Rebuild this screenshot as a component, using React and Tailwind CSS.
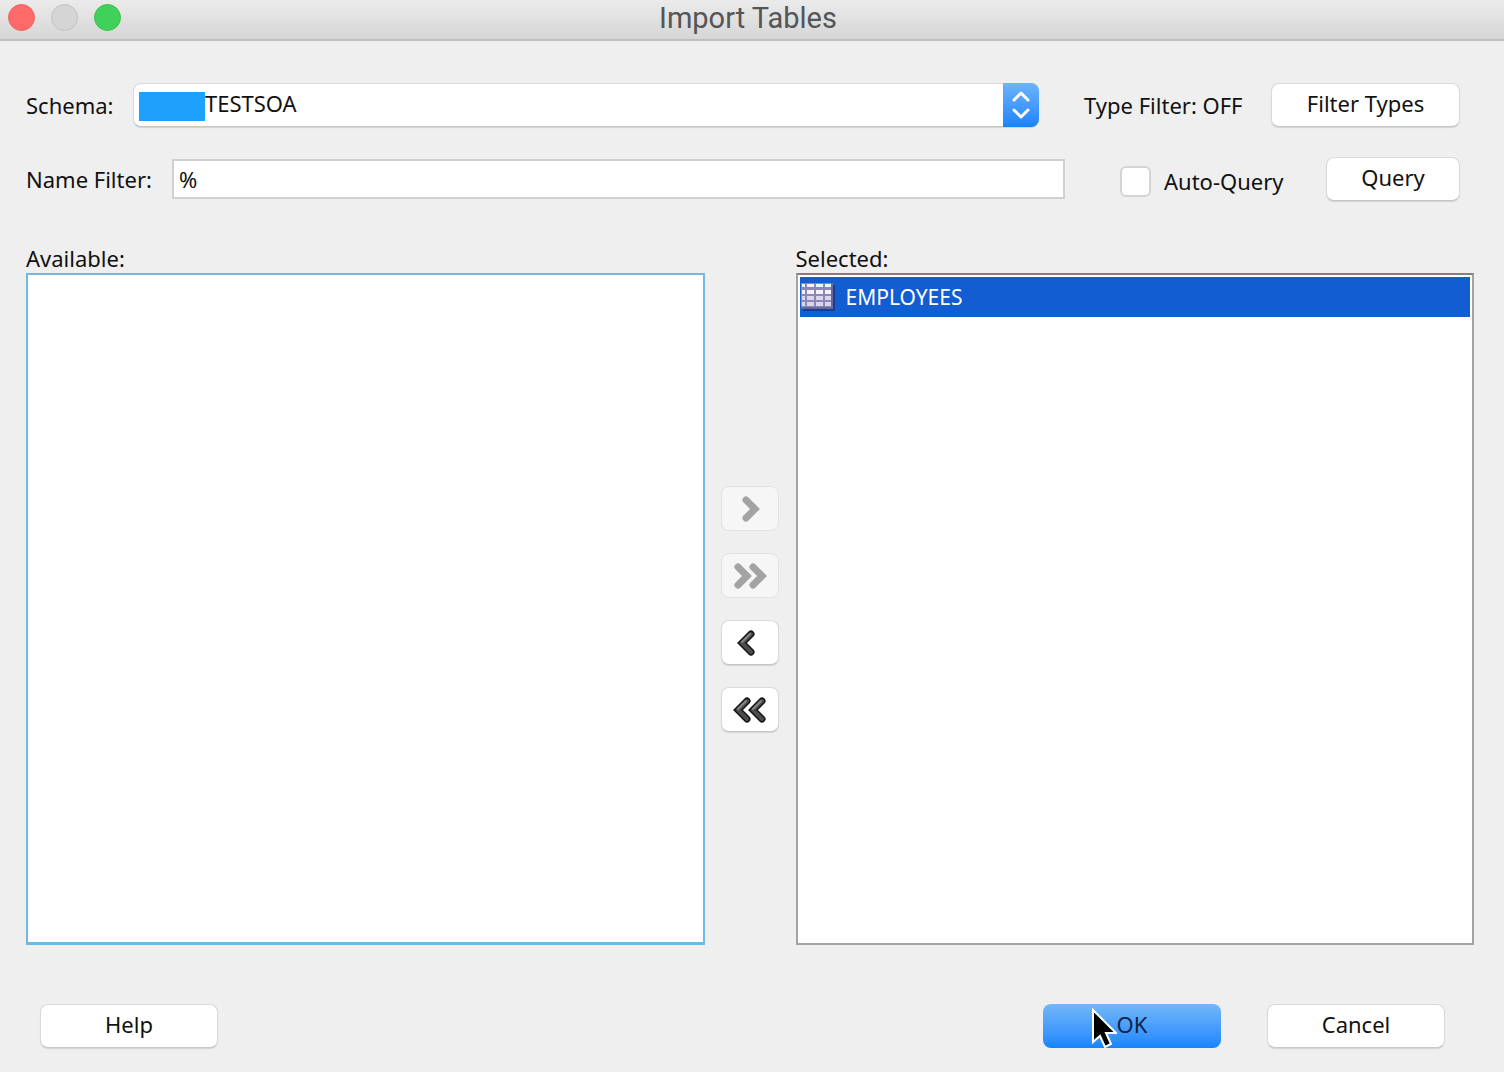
const BUTTON =
  "h-11 rounded-lg border border-[#dadada] border-b-[#c6c6c6] bg-white pb-1 text-center shadow-[0_1px_1px_rgba(0,0,0,0.12)]";

// centre line of one arrow head, pointing left
const HEAD = "M14 4L5 13L14 22";

function ArrowIcon({ right, double, disabled }) {
  const heads = double ? [15, 0] : [0];
  return (
    <svg
      className={`h-[26px] ${double ? "w-[34px]" : "w-[19px]"} ${right ? "-scale-x-100" : ""}`}
      viewBox={double ? "0 0 34 26" : "0 0 19 26"}
      fill="none"
      strokeLinecap="round"
      strokeLinejoin="miter"
    >
      {heads.map((x) => (
        <g key={x} transform={`translate(${x} 0)`}>
          <path d={HEAD} stroke={disabled ? "#a3a3a3" : "#141414"} strokeWidth="7" />
          {!disabled && (
            <>
              <path d={HEAD} stroke="#4c4c4c" strokeWidth="4" />
              <path d="M13 4L5 12" stroke="#858585" strokeWidth="2" />
            </>
          )}
        </g>
      ))}
    </svg>
  );
}

function TableIcon() {
  return (
    <svg className="h-[30px] w-9" viewBox="0 0 36 30">
      <rect x="3" y="3" width="32" height="26" fill="#173f91" />
      <rect x="1" y="1" width="32" height="26" fill="#6b66a0" />
      <rect x="1" y="1" width="30" height="24" fill="#8d87b4" />
      {[2, 8, 14, 20].map((y) =>
        [2, 7, 16, 25].map((x) => (
          <rect
            key={`${x}-${y}`}
            x={x}
            y={y}
            width={x === 2 ? 3 : x === 25 ? 6 : 7}
            height={y === 2 ? 3 : 4}
            fill={y > 13 ? "#d9d6ee" : "#f3f1fb"}
          />
        ))
      )}
    </svg>
  );
}

function MoveButton({ label, right, double, disabled }) {
  return (
    <button
      type="button"
      aria-label={label}
      disabled={disabled}
      className={`flex h-[45px] w-[58px] items-center justify-center rounded-lg border ${
        disabled
          ? "border-[#e2e2e2] bg-[#f6f6f6]"
          : "border-[#dadada] border-b-[#c6c6c6] bg-white shadow-[0_1px_1px_rgba(0,0,0,0.12)]"
      } ${!disabled && !double ? "pr-2" : ""}`}
    >
      <ArrowIcon right={right} double={double} disabled={disabled} />
    </button>
  );
}

function TitleBar() {
  return (
    <header className="relative flex h-[41px] items-center border-b-2 border-[#bfbfbf] bg-linear-to-b from-[#ebebeb] to-[#d6d6d6] pb-1 pl-2">
      <div className="flex gap-4">
        <button type="button" aria-label="Close" className="size-[27px] rounded-full border border-[#ec6560] bg-[#fd6a69]" />
        <button type="button" aria-label="Minimize" className="size-[27px] rounded-full border border-[#c2c2c2] bg-[#d5d5d5]" />
        <button type="button" aria-label="Zoom" className="size-[27px] rounded-full border border-[#3dbd50] bg-[#40d15a]" />
      </div>
      <h1 className="absolute inset-x-0 top-0 pr-2 text-center font-[Roboto,sans-serif] text-[29px] leading-9 text-[#555]">
        Import Tables
      </h1>
    </header>
  );
}

export default function App() {
  return (
    <div className="flex min-h-screen flex-col bg-[#efefef] font-['Noto_Sans','Open_Sans',sans-serif] text-[22px] leading-7 text-[#111]">
      <TitleBar />

      <main className="flex flex-1 flex-col pt-[42px] pr-[30px] pb-6 pl-[26px]">
        <div className="flex items-center pr-[14px]">
          <label htmlFor="schema" className="w-[107px]">Schema:</label>
          <div className="relative flex-1">
            <select
              id="schema"
              className="block h-11 w-full appearance-none rounded-lg border border-[#dadada] border-b-[#c6c6c6] bg-white pb-1 pl-[71px] shadow-[0_1px_1px_rgba(0,0,0,0.12)]"
            >
              <option>TESTSOA</option>
            </select>
            <span className="absolute top-[9px] left-[6px] h-[29px] w-[66px] bg-[#1ea1fd]" />
            <span className="pointer-events-none absolute inset-y-0 right-0 flex w-9 items-center justify-center rounded-r-lg bg-linear-to-b from-[#6cb3fa] to-[#1583fd]">
              <svg className="h-7 w-5" viewBox="0 0 20 28" fill="none" stroke="white" strokeWidth="3" strokeLinecap="round" strokeLinejoin="round">
                <path d="M3 9L10 2L17 9M3 19L10 26L17 19" />
              </svg>
            </span>
          </div>
          <span className="mr-6 ml-[45px] w-[163px]">Type Filter: OFF</span>
          <button type="button" className={`w-[189px] ${BUTTON}`}>Filter Types</button>
        </div>

        <div className="mt-[30px] flex items-center pr-[14px]">
          <label htmlFor="name-filter" className="w-[146px]">Name Filter:</label>
          <input
            id="name-filter"
            type="text"
            defaultValue="%"
            className="h-10 min-w-0 flex-1 border-2 border-[#d0d0d0] bg-white px-[5px] outline-none"
          />
          <label className="ml-[55px] flex w-[206px] items-center gap-[13px] pt-1">
            <input
              type="checkbox"
              className="size-[31px] appearance-none rounded-md border-2 border-[#d4d4d4] bg-white"
            />
            Auto-Query
          </label>
          <button type="button" className={`w-[134px] ${BUTTON}`}>Query</button>
        </div>

        <div className="mt-[43px] flex flex-1">
          <section className="flex flex-1 flex-col">
            <h2 id="available" className="pb-px">Available:</h2>
            <ul
              role="listbox"
              aria-labelledby="available"
              className="flex-1 border-2 border-b-[3px] border-[#70b8e8] bg-white"
            />
          </section>

          <div className="flex w-[91px] flex-col items-center justify-center gap-[22px] pt-[29px]">
            <MoveButton label="Add" right disabled />
            <MoveButton label="Add all" right double disabled />
            <MoveButton label="Remove" />
            <MoveButton label="Remove all" double />
          </div>

          <section className="flex flex-1 flex-col">
            <h2 id="selected" className="pb-px">Selected:</h2>
            <ul
              role="listbox"
              aria-labelledby="selected"
              className="flex-1 border-2 border-[#a3a3a3] border-t-[#808080] bg-white p-[2px]"
            >
              <li role="option" aria-selected="true" className="flex h-10 items-center gap-[10px] bg-[#135dd2] text-[21px] text-white">
                <TableIcon />
                EMPLOYEES
              </li>
            </ul>
          </section>
        </div>

        <footer className="mt-[59px] flex pr-[29px] pl-[14px]">
          <button type="button" className={`w-[178px] ${BUTTON}`}>Help</button>
          <button
            type="button"
            className="relative mr-[46px] ml-auto h-11 w-[178px] rounded-lg bg-linear-to-b from-[#72b7f8] to-[#1485fe] pb-1 text-[#0c2547]"
          >
            OK
            <svg className="absolute top-1 left-12 h-10 w-[26px]" viewBox="0 0 26 40">
              <path d="M2 2V34L9 28L14 39L20 36L15 25H25Z" fill="#000" stroke="#fff" strokeWidth="2" />
            </svg>
          </button>
          <button type="button" className={`w-[178px] ${BUTTON}`}>Cancel</button>
        </footer>
      </main>
    </div>
  );
}
